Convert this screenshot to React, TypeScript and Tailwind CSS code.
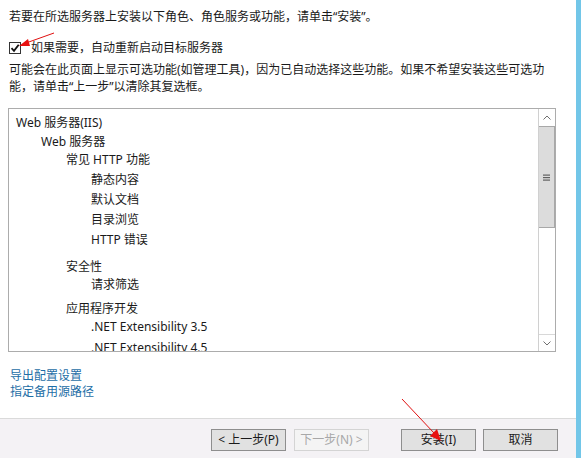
import React from "react";

const FONT = {
  fontFamily:
    '"Segoe UI", "Noto Sans", "Noto Sans CJK SC", "Microsoft YaHei", sans-serif',
};

type Row = { text: string; indent: number; mt: string };

const rows: Row[] = [
  { text: "Web 服务器(IIS)", indent: 0, mt: "mt-[5px]" },
  { text: "Web 服务器", indent: 1, mt: "mt-[1px]" },
  { text: "常见 HTTP 功能", indent: 2, mt: "mt-[0px]" },
  { text: "静态内容", indent: 3, mt: "mt-[2px]" },
  { text: "默认文档", indent: 3, mt: "mt-[2px]" },
  { text: "目录浏览", indent: 3, mt: "mt-[2px]" },
  { text: "HTTP 错误", indent: 3, mt: "mt-[2px]" },
  { text: "安全性", indent: 2, mt: "mt-[9px]" },
  { text: "请求筛选", indent: 3, mt: "mt-[0px]" },
  { text: "应用程序开发", indent: 2, mt: "mt-[6px]" },
  { text: ".NET Extensibility 3.5", indent: 3, mt: "mt-[0px]" },
  { text: ".NET Extensibility 4.5", indent: 3, mt: "mt-[3px]" },
];

const indentCls = ["pl-[7px]", "pl-[32px]", "pl-[57px]", "pl-[82px]"];

function Btn({
  children,
  disabled,
}: {
  children: React.ReactNode;
  disabled?: boolean;
}) {
  return (
    <div
      className={
        "flex h-[22px] w-[75px] items-center justify-center border text-[12px] " +
        (disabled
          ? "border-[#d4d4d4] bg-[#f4f4f4] text-[#a8a8a8]"
          : "border-[#8e8e8e] bg-[#e1e1e1] text-[#1a1a1a]")
      }
    >
      {children}
    </div>
  );
}

export default function App() {
  return (
    <div
      className="relative flex h-[458px] w-[581px] overflow-hidden bg-white text-[12px] text-[#1a1a1a]"
      style={FONT}
    >
      <div className="flex w-[576px] flex-col">
        <div className="flex-1">
          <p className="mt-[8px] whitespace-nowrap pl-[9px] leading-[18px]">
            若要在所选服务器上安装以下角色、角色服务或功能，请单击“安装”。
          </p>
          <label className="mt-[13px] flex h-[18px] items-center pl-[9px]">
            <span className="flex h-[12px] w-[12px] items-center justify-center border border-[#333333] bg-white">
              <svg width="10" height="10" viewBox="0 0 10 10">
                <path
                  d="M1.5 5.2 L4 7.8 L8.7 1.8"
                  fill="none"
                  stroke="#111"
                  strokeWidth="1.8"
                />
              </svg>
            </span>
            <span className="ml-[10px] leading-[18px]">
              如果需要，自动重新启动目标服务器
            </span>
          </label>
          <p className="mt-[4px] whitespace-nowrap pl-[9px] leading-[17px]">
            可能会在此页面上显示可选功能(如管理工具)，因为已自动选择这些功能。如果不希望安装这些可选功
            <br />
            能，请单击“上一步”以清除其复选框。
          </p>
          <div className="ml-[8px] mt-[13px] flex h-[244px] w-[548px] border border-[#acacac]">
            <div className="flex-1 overflow-hidden">
              {rows.map((r, i) => (
                <div
                  key={i}
                  className={
                    "h-[18px] whitespace-nowrap leading-[18px] " +
                    r.mt +
                    " " +
                    indentCls[r.indent]
                  }
                >
                  {r.text}
                </div>
              ))}
            </div>
            <div className="flex w-[17px] flex-col border-l border-[#d0d0d0] bg-white">
              <div className="flex h-[17px] items-center justify-center">
                <svg width="8" height="5" viewBox="0 0 8 5">
                  <path
                    d="M0.5 4.5 L4 1 L7.5 4.5"
                    fill="none"
                    stroke="#707070"
                    strokeWidth="1"
                  />
                </svg>
              </div>
              <div className="flex h-[102px] items-center justify-center border border-l-0 border-[#a8a8a8] bg-[#dcdcdc]">
                <svg width="7" height="7" viewBox="0 0 7 7">
                  <rect x="0" y="0.5" width="7" height="1.2" fill="#606060" />
                  <rect x="0" y="3" width="7" height="1.2" fill="#606060" />
                  <rect x="0" y="5.5" width="7" height="1.2" fill="#606060" />
                </svg>
              </div>
              <div className="flex-1" />
              <div className="flex h-[17px] items-center justify-center border-t border-[#d8d8d8]">
                <svg width="8" height="5" viewBox="0 0 8 5">
                  <path
                    d="M0.5 0.5 L4 4 L7.5 0.5"
                    fill="none"
                    stroke="#707070"
                    strokeWidth="1"
                  />
                </svg>
              </div>
            </div>
          </div>
          <div className="mt-[16px] pl-[10px] leading-[16px] text-[#1e6ea6]">
            <div>导出配置设置</div>
            <div>指定备用源路径</div>
          </div>
        </div>
        <div className="flex h-[40px] items-start justify-end border-t border-[#dadada] bg-[#f4f2f5] pr-[18px] pt-[10px]">
          <Btn>&lt; 上一步(P)</Btn>
          <div className="ml-[8px]">
            <Btn disabled>下一步(N) &gt;</Btn>
          </div>
          <div className="ml-[32px]">
            <Btn>安装(I)</Btn>
          </div>
          <div className="ml-[7px]">
            <Btn>取消</Btn>
          </div>
        </div>
      </div>
      <div className="w-[5px] bg-[#72c6e8]" />

      <svg
        className="pointer-events-none absolute left-0 top-0"
        width="581"
        height="458"
        viewBox="0 0 581 458"
      >
        <line x1="54" y1="33" x2="26" y2="43" stroke="#e01010" strokeWidth="1" />
        <polygon points="19,46 28,39 30,46" fill="#e81010" />
        <line x1="402" y1="399" x2="434" y2="433" stroke="#e01010" strokeWidth="1" />
        <polygon points="441,441 430,436 437,429" fill="#e81010" />
      </svg>
    </div>
  );
}
